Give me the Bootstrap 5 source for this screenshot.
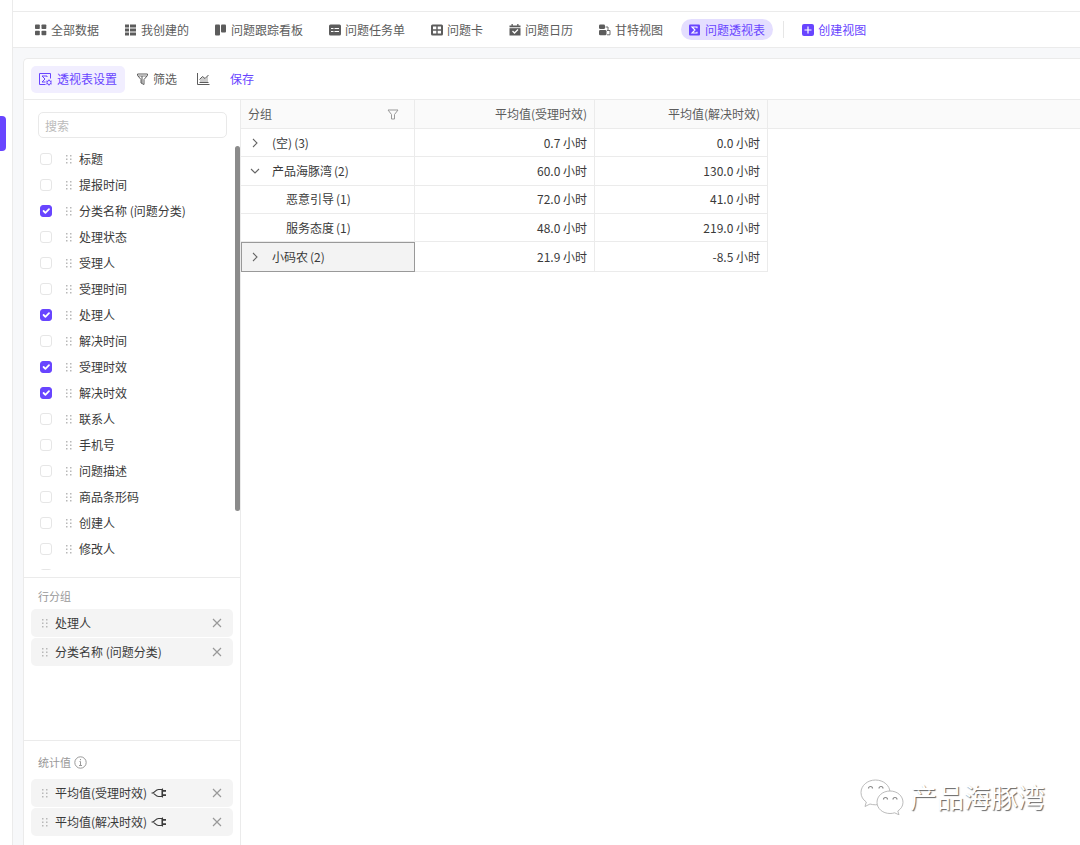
<!DOCTYPE html>
<html lang="zh-CN">
<head>
<meta charset="utf-8">
<meta name="viewport" content="width=device-width, initial-scale=1">
<title>问题透视表</title>
<link href="https://cdn.jsdelivr.net/npm/bootstrap@5.3.0/dist/css/bootstrap.min.css" rel="stylesheet">
<style>
  :root { --brand: #6845ff; --line: #ebebeb; }
  body { font-family: "Noto Sans CJK SC", sans-serif; font-size: 12px; line-height: 18px; color: #3a3a3a; background: #fff; }
  button { font-size: 12px; line-height: 18px; }
  svg { display: block; flex: none; }
  .rail { width: 13px; border-right: 1px solid var(--line); }
  .rail-mark { width: 6px; height: 35px; margin-top: 116px; background: var(--brand); border-radius: 0 4px 4px 0; }
  .topline { height: 12px; border-bottom: 1px solid var(--line); }
  .views { height: 36px; padding: 0 14px; gap: 10px; border-bottom: 1px solid var(--line); }
  .view-tab { height: 21px; padding: 0 8px; gap: 4px; border: 0; border-radius: 11px; background: none; color: #5c5c5c; white-space: nowrap; }
  .view-tab.active { background: #e4deff; color: var(--brand); }
  .view-tab.create { color: var(--brand); }
  .divider { width: 1px; height: 17px; background: #e6e6e6; }
  .canvas { background: #f7f8fa; padding: 10px 0 0 10px; }
  .panel { background: #fff; border: 1px solid var(--line); border-width: 1px 0 0 1px; border-radius: 5px 0 0 0; }
  .tools { height: 41px; padding: 0 7px; border-bottom: 1px solid var(--line); }
  .tool { height: 27px; border: 0; border-radius: 5px; background: none; color: #5c5c5c; padding: 0 8px; gap: 5px; }
  .tool.active { background: #f1eeff; color: var(--brand); }
  .tool.save { color: var(--brand); padding: 0 12px; }
  .side { width: 217px; border-right: 1px solid var(--line); }
  .search { height: 26px; margin: 12px 13px 8px 14px; padding: 0 6px; font-size: 12px; border-color: #e9e9e9; border-radius: 5px; }
  .search::placeholder { color: #bbb; }
  .fields { margin-bottom: 7px; padding-left: 16px; }
  .field { height: 26px; gap: 7px; }
  .field .form-check-input { width: 12px; height: 12px; margin: 0 7px 0 0; border-color: #e6e6e6; border-radius: 3px; flex: none; }
  .field .form-check-input:checked { background-color: var(--brand); border-color: var(--brand); background-size: 12px; }
  .grip { color: #b8b8b8; }
  .thumb { position: absolute; right: 0; top: 46px; width: 5px; height: 365px; border-radius: 3px; background: #8b8b8b; }
  .group { border-top: 1px solid var(--line); padding: 9px 7px 0; }
  .rows-group { height: 163px; }
  .stats-group { height: 105px; padding-top: 12px; }
  .group-title { font-size: 11px; color: #999; padding-left: 7px; margin-bottom: 4px; gap: 3px; }
  .stats-group .group-title { margin-bottom: 8px; }
  .chip { height: 28px; margin-bottom: 1px; padding: 0 11px; gap: 7px; background: #f4f4f4; border-radius: 5px; }
  .chip button { border: 0; background: none; padding: 0; color: #999; }
  .pivot { table-layout: fixed; width: 100%; height: 172px; border-collapse: separate; border-spacing: 0; }
  .pivot th, .pivot td { padding: 0 7px; border-bottom: 1px solid var(--line); border-right: 1px solid var(--line); text-align: right; font-weight: 400; }
  .pivot th { height: 29px; background: #fafafa; color: #5c5c5c; }
  .pivot th:last-child { border-right: 0; }
  .pivot td:last-child { border: 0; }
  .pivot td:first-child, .pivot th:first-child { text-align: left; }
  .pivot .c1 { width: 174px; } .pivot .c2 { width: 180px; } .pivot .c3 { width: 173px; }
  .pivot .twist { border: 0; background: none; padding: 0; margin: 0 12px 0 2px; color: #666; }
  .pivot .child { padding-left: 45px; }
  .pivot td.picked { background: #f3f3f3; border: 1px solid #999; }
  .pivot .picked .twist { margin-left: 1px; }
  .count { margin-left: 2px; }
  .signature { position: absolute; right: 35px; bottom: 28px; gap: 6px; font-size: 27px; line-height: 40px; color: #fff; text-shadow: 1px 1px 1px #666; }
</style>
</head>
<body>
<svg class="d-none" aria-hidden="true">
  <symbol id="grip" viewBox="0 0 6 10"><g fill="currentColor"><path d="M0 1h1.500v1.500H0zM4 1h1.500v1.500H4zM0 4.500h1.500V6H0zM4 4.500h1.500V6H4zM0 8h1.500v1.500H0zM4 8h1.500v1.500H4z"/></g></symbol>
  <symbol id="cross" viewBox="0 0 10 10"><path d="M1 1l8 8M9 1L1 9" stroke="currentColor" stroke-width="1.200"/></symbol>
  <symbol id="right" viewBox="0 0 10 10"><path d="M3 1l4 4-4 4" fill="none" stroke="currentColor" stroke-width="1.100"/></symbol>
  <symbol id="down" viewBox="0 0 10 10"><path d="M1 3l4 4 4-4" fill="none" stroke="currentColor" stroke-width="1.100"/></symbol>
  <symbol id="plug" viewBox="0 0 16 10"><path d="M.5 5h1C4 4.500 4.500 1.500 7.500 1.500H11v7H7.500C4.500 8.500 4 5.500 1.500 5M11.500 .5v9" fill="none" stroke="currentColor" stroke-width="1.100"/><path d="M11.500 2h3.500v1.800h-3.500zM11.500 6.200h3.500V8h-3.500z" fill="currentColor"/></symbol>
</svg>
<div class="d-flex vh-100 position-relative overflow-hidden">
  <div class="rail flex-shrink-0"><div class="rail-mark"></div></div>
  <div class="d-flex flex-column flex-grow-1 overflow-hidden">
    <div class="topline flex-shrink-0"></div>
    <nav class="views d-flex align-items-center flex-shrink-0" aria-label="视图">
      <button class="view-tab d-flex align-items-center"><svg width="12" height="12" fill="currentColor"><rect x="0" y=".5" width="4.800" height="4.500" rx=".8"/><rect x="6.500" y=".5" width="4.800" height="4.500" rx=".8"/><rect x="0" y="6.800" width="4.800" height="4.500" rx=".8"/><rect x="6.500" y="6.800" width="4.800" height="4.500" rx=".8"/></svg>全部数据</button>
      <button class="view-tab d-flex align-items-center"><svg width="12" height="12" fill="currentColor"><path d="M0 .5h4v3H0zM5 .5h6v3H5zM0 4.500h4v3H0zM5 4.500h6v3H5zM0 8.500h4v3H0zM5 8.500h6v3H5z"/></svg>我创建的</button>
      <button class="view-tab d-flex align-items-center"><svg width="12" height="12" fill="currentColor"><rect x="0" y=".5" width="5" height="11" rx="1"/><rect x="6" y=".5" width="5" height="8" rx="1"/></svg>问题跟踪看板</button>
      <button class="view-tab d-flex align-items-center"><svg width="12" height="12"><rect y=".5" width="12" height="11" rx="1.500" fill="currentColor"/><path d="M2 4.500h2.500M5.500 4.500H10M2 7.500h2.500M5.500 7.500H10" stroke="#fff" stroke-width="1.200"/></svg>问题任务单</button>
      <button class="view-tab d-flex align-items-center"><svg width="12" height="12"><rect y=".5" width="12" height="11" rx="1.500" fill="currentColor"/><path d="M2 2.500h3.300v2.800H2zM6.700 2.500H10v2.800H6.700zM2 6.700h3.300v2.800H2zM6.700 6.700H10v2.800H6.700z" fill="#fff"/></svg>问题卡</button>
      <button class="view-tab d-flex align-items-center"><svg width="12" height="12"><path d="M.5 1.500h2V0h1.300v1.500h4.400V0h1.300v1.500h2V11.500H.5z" fill="currentColor"/><path d="M0 3.700h12" stroke="#fff" stroke-width=".9"/><path d="M3.500 7l2 2 3.500-3.500" fill="none" stroke="#fff" stroke-width="1.300"/></svg>问题日历</button>
      <button class="view-tab d-flex align-items-center"><svg width="12" height="12"><rect x="0" y=".5" width="6" height="4.500" rx="1.300" fill="currentColor"/><rect x="0" y="6" width="7.500" height="5.300" rx="1.300" fill="currentColor"/><path d="M6.500 3H9v3M8 6.500h3v4.300H8" fill="none" stroke="currentColor" stroke-width=".9"/></svg>甘特视图</button>
      <button class="view-tab active d-flex align-items-center"><svg width="12" height="12"><rect width="11" height="11" y=".5" rx="1" fill="currentColor"/><path d="M8 4.200V3H3l3 3-3 3h5V7.800" fill="none" stroke="#fff" stroke-width="1.100"/></svg>问题透视表</button>
      <span class="divider"></span>
      <button class="view-tab create d-flex align-items-center"><svg width="12" height="12"><rect width="12" height="12" rx="2" fill="currentColor"/><path d="M6 2.500v7M2.500 6h7" stroke="#fff" stroke-width="1.200"/></svg>创建视图</button>
    </nav>
    <main class="canvas d-flex flex-grow-1 overflow-hidden">
      <div class="panel d-flex flex-column flex-grow-1 overflow-hidden">
        <div class="tools d-flex align-items-center flex-shrink-0">
          <button class="tool active d-flex align-items-center"><svg width="13" height="13" fill="none" stroke="currentColor"><path d="M6.500 11.500h-6v-11h11v5M8 4V3H3l3 3-3 3h3.500"/><circle cx="10" cy="9.500" r="2"/><path d="M10 6.500v1M10 11.500v1M7.300 8l.9.500M11.800 10.500l.9.500M7.300 11l.9-.5M11.800 8.500l.9-.5"/></svg>透视表设置</button>
          <button class="tool d-flex align-items-center ms-1"><svg width="11" height="12"><path d="M.5 1h10v1.500L7 6.500v5L4 10V6.500L.5 2.500z" fill="none" stroke="currentColor"/><path d="M5 3v7" stroke="currentColor"/><path d="M1 3h9" stroke="currentColor" stroke-width=".8"/></svg>筛选</button>
          <button class="tool d-flex align-items-center ms-1" aria-label="图表"><svg width="13" height="12" fill="none" stroke="currentColor"><path d="M.5 0v11.500H12.500"/><path d="M3 9V6l2.500-2.500L8 5.500l3-3V9z" fill="#ccc" stroke="none"/><path d="M2.500 6.500l3-3L8 5.500l3.500-3.500M2.500 9.500h9"/></svg></button>
          <button class="tool save">保存</button>
        </div>
        <div class="d-flex flex-grow-1 overflow-hidden">
          <aside class="side d-flex flex-column flex-shrink-0">
            <section class="d-flex flex-column flex-grow-1 overflow-hidden position-relative">
              <input class="search form-control flex-shrink-0 w-auto" type="text" placeholder="搜索" aria-label="搜索">
              <div class="fields overflow-hidden flex-grow-1">
                <label class="field d-flex align-items-center"><input class="form-check-input" type="checkbox"><svg class="grip" width="6" height="10"><use href="#grip"/></svg>标题</label>
                <label class="field d-flex align-items-center"><input class="form-check-input" type="checkbox"><svg class="grip" width="6" height="10"><use href="#grip"/></svg>提报时间</label>
                <label class="field d-flex align-items-center"><input class="form-check-input" type="checkbox" checked><svg class="grip" width="6" height="10"><use href="#grip"/></svg>分类名称 (问题分类)</label>
                <label class="field d-flex align-items-center"><input class="form-check-input" type="checkbox"><svg class="grip" width="6" height="10"><use href="#grip"/></svg>处理状态</label>
                <label class="field d-flex align-items-center"><input class="form-check-input" type="checkbox"><svg class="grip" width="6" height="10"><use href="#grip"/></svg>受理人</label>
                <label class="field d-flex align-items-center"><input class="form-check-input" type="checkbox"><svg class="grip" width="6" height="10"><use href="#grip"/></svg>受理时间</label>
                <label class="field d-flex align-items-center"><input class="form-check-input" type="checkbox" checked><svg class="grip" width="6" height="10"><use href="#grip"/></svg>处理人</label>
                <label class="field d-flex align-items-center"><input class="form-check-input" type="checkbox"><svg class="grip" width="6" height="10"><use href="#grip"/></svg>解决时间</label>
                <label class="field d-flex align-items-center"><input class="form-check-input" type="checkbox" checked><svg class="grip" width="6" height="10"><use href="#grip"/></svg>受理时效</label>
                <label class="field d-flex align-items-center"><input class="form-check-input" type="checkbox" checked><svg class="grip" width="6" height="10"><use href="#grip"/></svg>解决时效</label>
                <label class="field d-flex align-items-center"><input class="form-check-input" type="checkbox"><svg class="grip" width="6" height="10"><use href="#grip"/></svg>联系人</label>
                <label class="field d-flex align-items-center"><input class="form-check-input" type="checkbox"><svg class="grip" width="6" height="10"><use href="#grip"/></svg>手机号</label>
                <label class="field d-flex align-items-center"><input class="form-check-input" type="checkbox"><svg class="grip" width="6" height="10"><use href="#grip"/></svg>问题描述</label>
                <label class="field d-flex align-items-center"><input class="form-check-input" type="checkbox"><svg class="grip" width="6" height="10"><use href="#grip"/></svg>商品条形码</label>
                <label class="field d-flex align-items-center"><input class="form-check-input" type="checkbox"><svg class="grip" width="6" height="10"><use href="#grip"/></svg>创建人</label>
                <label class="field d-flex align-items-center"><input class="form-check-input" type="checkbox"><svg class="grip" width="6" height="10"><use href="#grip"/></svg>修改人</label>
                <label class="field d-flex align-items-center"><input class="form-check-input" type="checkbox" aria-label="更多字段"></label>
              </div>
              <div class="thumb"></div>
            </section>
            <section class="group rows-group flex-shrink-0">
              <div class="group-title">行分组</div>
              <div class="chip d-flex align-items-center"><svg class="grip" width="6" height="10"><use href="#grip"/></svg><span>处理人</span><button class="ms-auto" aria-label="移除"><svg width="10" height="10"><use href="#cross"/></svg></button></div>
              <div class="chip d-flex align-items-center"><svg class="grip" width="6" height="10"><use href="#grip"/></svg><span>分类名称 (问题分类)</span><button class="ms-auto" aria-label="移除"><svg width="10" height="10"><use href="#cross"/></svg></button></div>
            </section>
            <section class="group stats-group flex-shrink-0">
              <div class="group-title d-flex align-items-center">统计值<svg width="13" height="13" fill="none" stroke="currentColor"><circle cx="6.500" cy="6.500" r="5.700"/><path d="M6.500 3v1.200M5.500 5.500h1v4M5 9.500h3"/></svg></div>
              <div class="chip d-flex align-items-center"><svg class="grip" width="6" height="10"><use href="#grip"/></svg><span class="d-flex align-items-center">平均值(受理时效)<svg class="ms-1" width="16" height="10"><use href="#plug"/></svg></span><button class="ms-auto" aria-label="移除"><svg width="10" height="10"><use href="#cross"/></svg></button></div>
              <div class="chip d-flex align-items-center"><svg class="grip" width="6" height="10"><use href="#grip"/></svg><span class="d-flex align-items-center">平均值(解决时效)<svg class="ms-1" width="16" height="10"><use href="#plug"/></svg></span><button class="ms-auto" aria-label="移除"><svg width="10" height="10"><use href="#cross"/></svg></button></div>
            </section>
          </aside>
          <div class="flex-grow-1 overflow-hidden">
            <table class="pivot">
              <thead>
                <tr><th class="c1"><div class="d-flex align-items-center justify-content-between">分组<svg class="me-2" width="12" height="11" fill="none" stroke="#999"><path d="M1 1h10L7.500 5.500V10h-3V5.500z"/></svg></div></th><th class="c2">平均值(受理时效)</th><th class="c3">平均值(解决时效)</th><th></th></tr>
              </thead>
              <tbody>
                <tr><td><div class="d-flex align-items-center"><button class="twist" aria-label="展开"><svg width="10" height="10"><use href="#right"/></svg></button>(空)<span class="count">(3)</span></div></td><td>0.7 小时</td><td>0.0 小时</td><td></td></tr>
                <tr><td><div class="d-flex align-items-center"><button class="twist" aria-label="收起"><svg width="10" height="10"><use href="#down"/></svg></button>产品海豚湾<span class="count">(2)</span></div></td><td>60.0 小时</td><td>130.0 小时</td><td></td></tr>
                <tr><td class="child">恶意引导<span class="count">(1)</span></td><td>72.0 小时</td><td>41.0 小时</td><td></td></tr>
                <tr><td class="child">服务态度<span class="count">(1)</span></td><td>48.0 小时</td><td>219.0 小时</td><td></td></tr>
                <tr><td class="picked"><div class="d-flex align-items-center"><button class="twist" aria-label="展开"><svg width="10" height="10"><use href="#right"/></svg></button>小码农<span class="count">(2)</span></div></td><td>21.9 小时</td><td>-8.5 小时</td><td></td></tr>
              </tbody>
            </table>
          </div>
        </div>
      </div>
    </main>
  </div>
  <div class="signature d-flex align-items-center">
    <svg width="44" height="36" viewBox="0 0 44 36" fill="#fff" stroke="#aaa" stroke-width=".8"><path d="M15.500 1C7.500 1 1 6.500 1 13.500c0 4 2 7.300 5.300 9.500L5 27.500l5-2.500c1.700.5 3.500.8 5.500.8C23.500 25.800 30 20.500 30 13.500S23.500 1 15.500 1z"/><path d="M30 12c-7.300 0-13 5-13 11.300S22.700 34.500 30 34.500c1.600 0 3.200-.2 4.600-.7l4.400 2-1.200-3.800c3.200-2 5.200-5 5.200-8.700C43 17 37.300 12 30 12z"/><path d="M8.500 9.500a2 2 0 0 1 4 0M19 9.500a2 2 0 0 1 4 0M23.500 20.500a2 2 0 0 1 4 0M33 20.500a2 2 0 0 1 4 0" fill="none" stroke="#888" stroke-width="1.200"/></svg>
    <span>产品海豚湾</span>
  </div>
</div>
<script src="https://cdn.jsdelivr.net/npm/bootstrap@5.3.0/dist/js/bootstrap.bundle.min.js"></script>
</body>
</html>
